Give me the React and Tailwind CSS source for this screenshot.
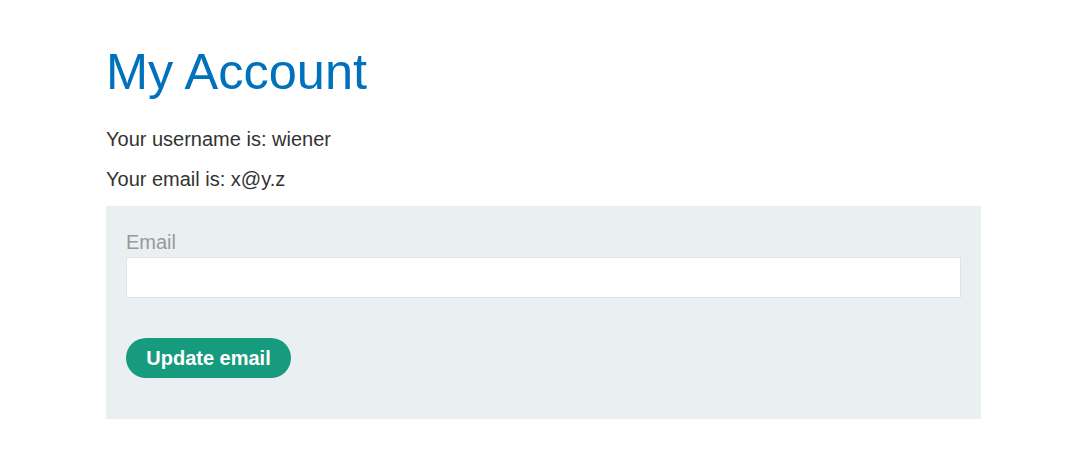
import React, { useState } from 'react';

function App() {
  const [email, setEmail] = useState('');

  return (
    <div className="min-h-screen bg-white" style={{ fontFamily: '"Liberation Sans", Arial, sans-serif' }}>
      <div className="ml-[106px] w-[875px] pt-[42px]">
        <h1 className="text-[50.5px] leading-[60px] text-[#0071bc] font-normal">My Account</h1>
        <p className="mt-[25px] text-[20px] leading-[24px] text-[#333332]">Your username is: wiener</p>
        <p className="mt-[16px] text-[20px] leading-[24px] text-[#333332]">Your email is: x@y.z</p>
        <form
          onSubmit={e => e.preventDefault()}
          className="mt-[15px] bg-[#eaeff2] px-[20px] pt-[24px] pb-[41px]"
        >
          <label className="block text-[20px] leading-[24px] text-[#999999]">Email</label>
          <input
            type="email"
            value={email}
            onChange={e => setEmail(e.target.value)}
            className="mt-[3px] block w-full h-[41px] bg-white border border-[#e0e4e6] px-2 text-[16px] focus:outline-none"
          />
          <button
            type="submit"
            className="mt-[40px] h-[40px] px-[20px] w-[165px] rounded-full bg-[#179b7e] text-white font-bold text-[20px] leading-[24px]"
          >
            Update email
          </button>
        </form>
      </div>
    </div>
  );
}

export default App;
